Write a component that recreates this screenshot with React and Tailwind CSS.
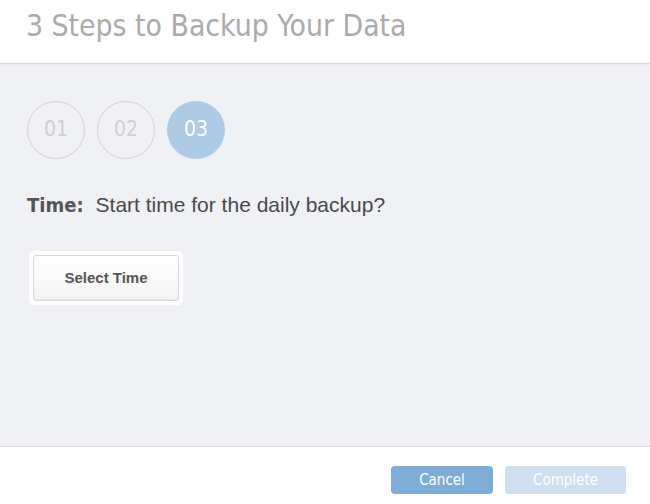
export default function App() {
  const circle = "w-[58px] h-[58px] rounded-full flex items-center justify-center text-[21px]";
  const cond = { fontFamily: '"DejaVu Sans Condensed", "DejaVu Sans", sans-serif' };
  return (
    <div className="w-[650px] h-[504px] flex flex-col bg-white overflow-hidden">
      <div className="h-[64px] shrink-0 flex items-start pl-[26px] pt-[7px] border-b border-[#d6d6d6]">
        <h1 className="text-[29.8px] leading-[38px] text-[#ababab]" style={cond}>
          3 Steps to Backup Your Data
        </h1>
      </div>
      <div className="flex-1 bg-[#f0f1f5] border-t border-[#ececec] border-b border-b-[#dcdcdc] pl-[27px] pt-[36px]">
        <div className="flex gap-[12px]" style={cond}>
          <div className={circle + " border border-[#d2d2d2] text-[#cfcfcf]"}>01</div>
          <div className={circle + " border border-[#d2d2d2] text-[#cfcfcf]"}>02</div>
          <div className={circle + " bg-[#aecbe6] text-white"}>03</div>
        </div>
        <div className="mt-[31px] flex items-baseline h-[26px] text-[#4a4a4a]">
          <span className="font-bold text-[20px] text-[#555]" style={cond}>Time:</span>
          <span className="ml-[12px] text-[21px] leading-[26px]" style={{ fontFamily: '"Liberation Sans", Arial, sans-serif' }}>Start time for the daily backup?</span>
        </div>
        <div className="mt-[35px] ml-[2px] w-[154px] h-[54px] bg-white rounded-[5px] p-[4px]">
          <div className="w-full h-full rounded-[3px] border border-[#d8d8d8] bg-gradient-to-b from-white to-[#f4f4f4] shadow-[inset_0_-1px_2px_rgba(0,0,0,0.06)] flex items-center justify-center text-[15px] font-bold text-[#555]" style={{ fontFamily: '"Liberation Sans", Arial, sans-serif' }}>
            Select Time
          </div>
        </div>
      </div>
      <div className="h-[57px] shrink-0 flex items-start justify-end pt-[19px] pr-[24px] gap-[12px]" style={cond}>
        <div className="w-[102px] h-[28px] rounded-[4px] bg-[#7eacd9] text-white text-[15px] flex items-center justify-center">Cancel</div>
        <div className="w-[121px] h-[28px] rounded-[4px] bg-[#cddff0] text-white text-[15px] flex items-center justify-center">Complete</div>
      </div>
    </div>
  );
}
